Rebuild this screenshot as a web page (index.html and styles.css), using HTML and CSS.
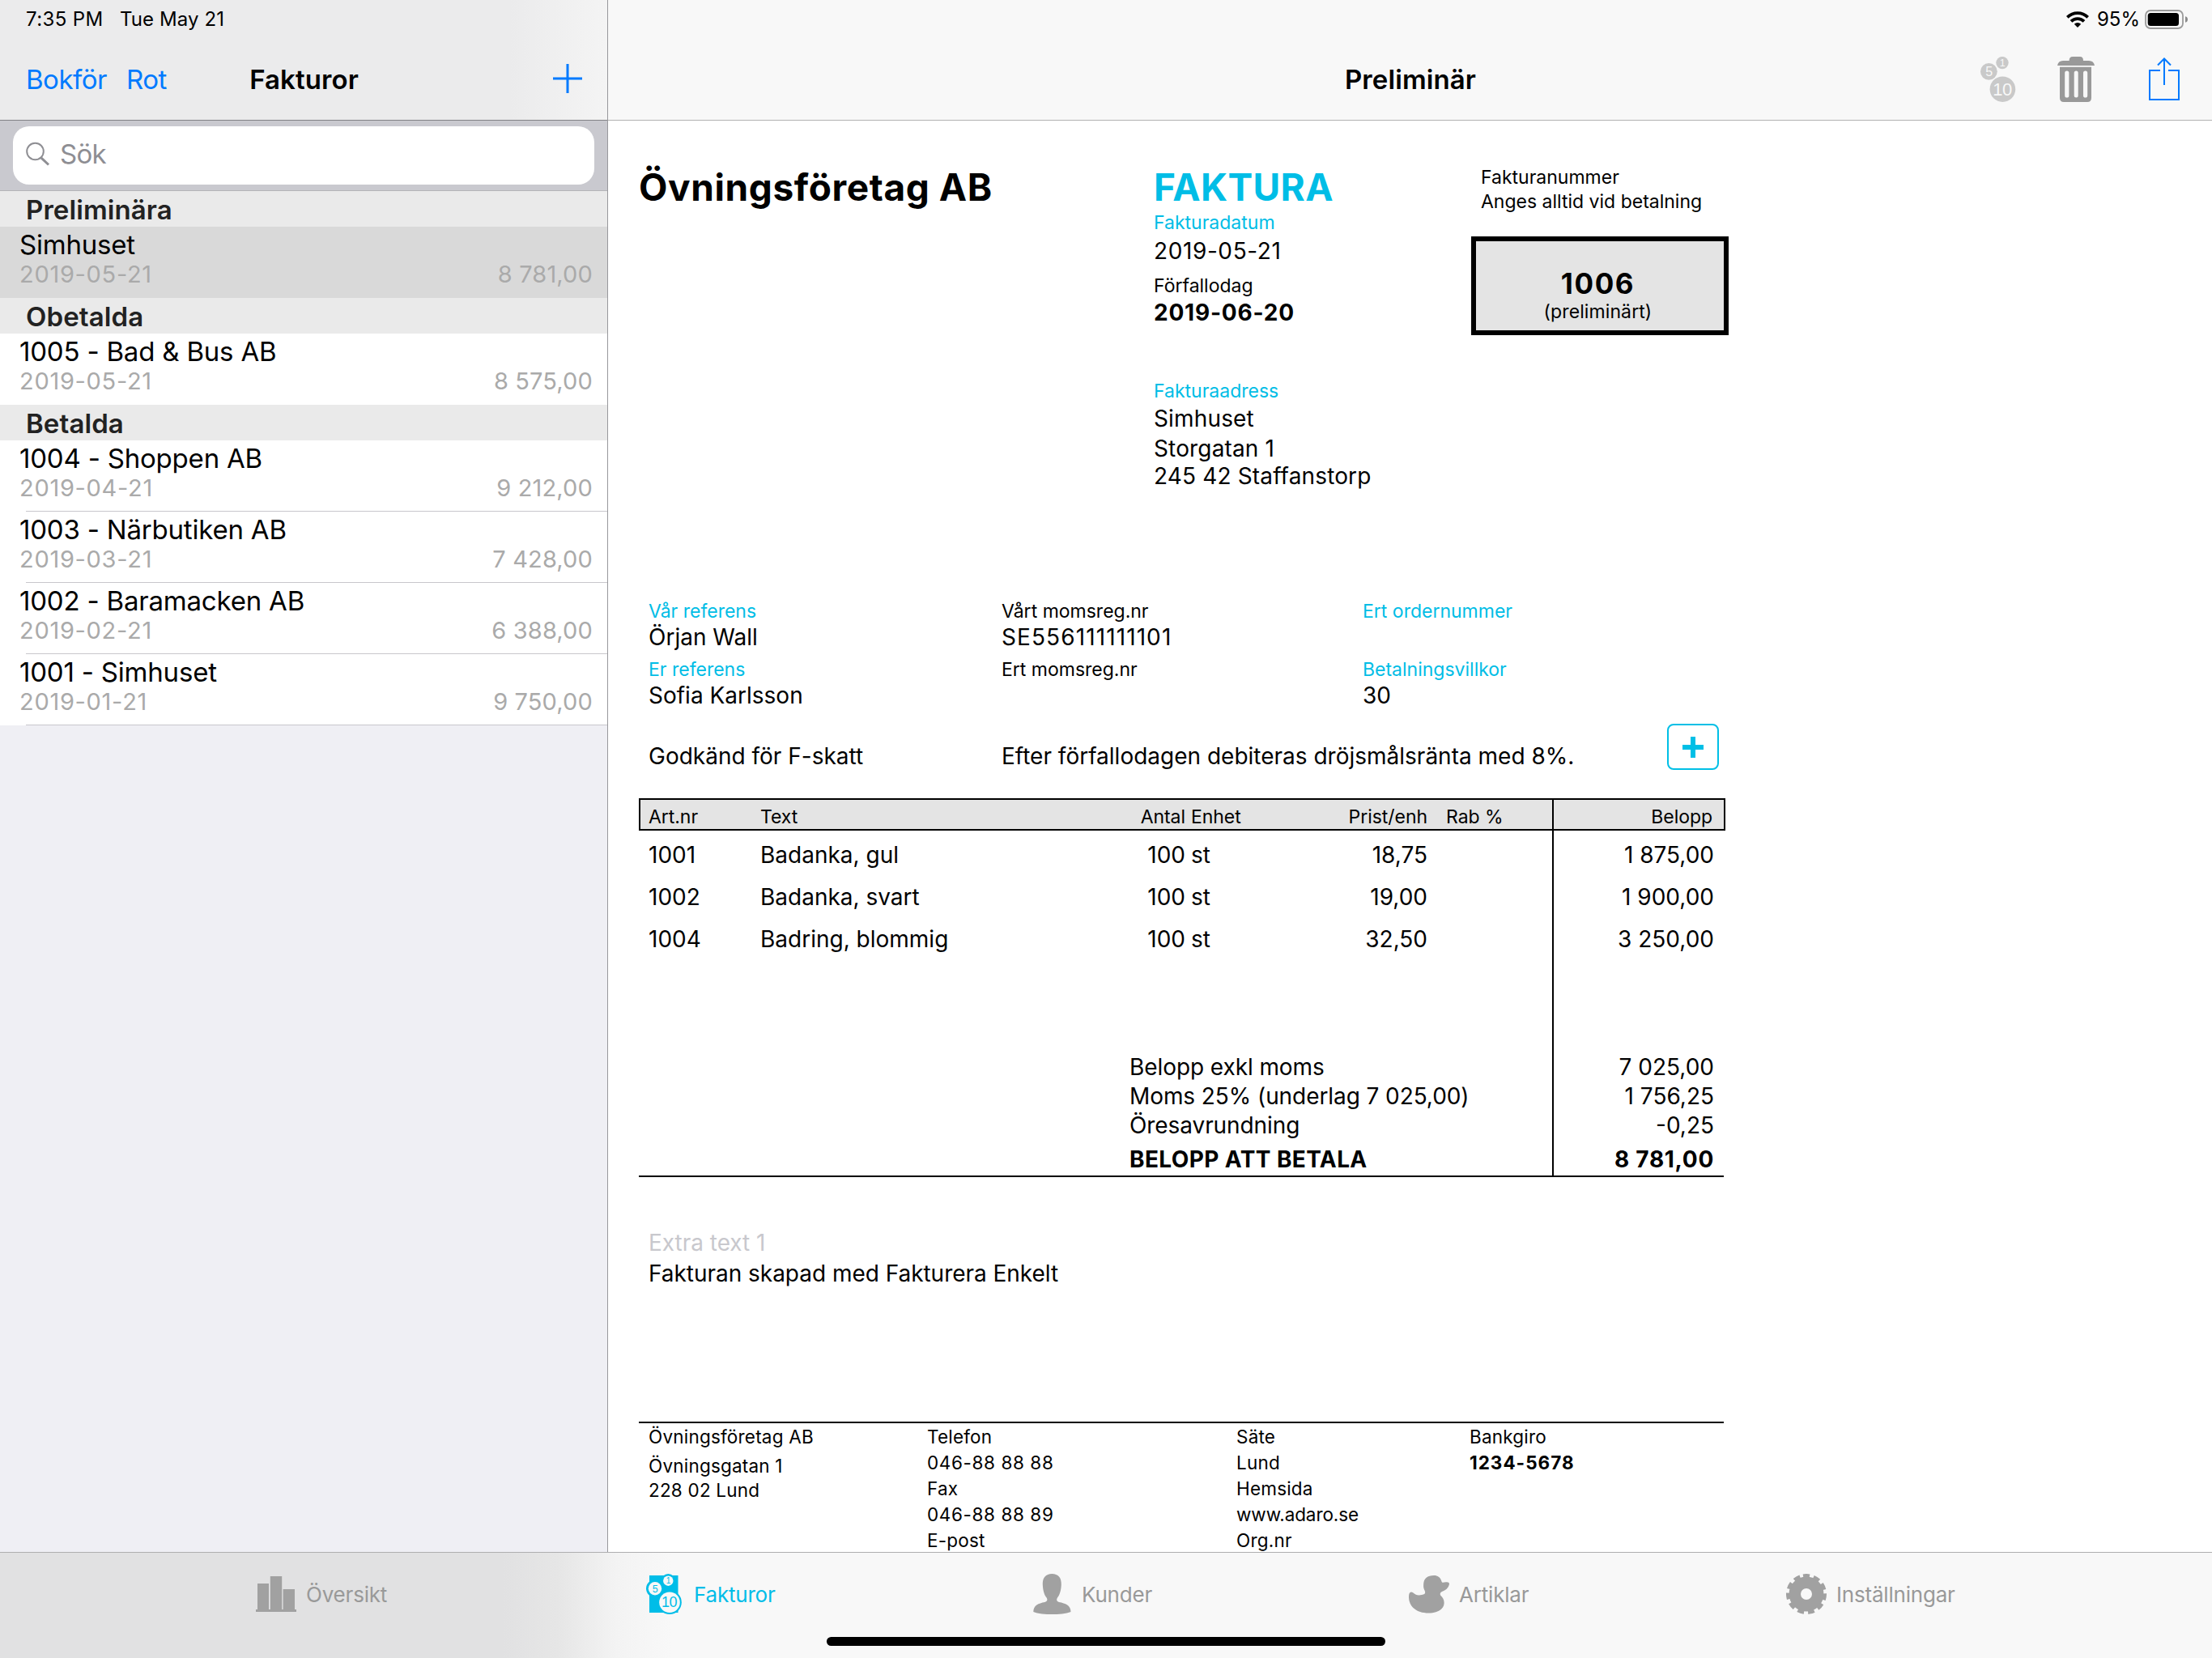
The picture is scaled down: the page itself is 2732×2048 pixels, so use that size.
FILE: index.html
```
<!DOCTYPE html>
<html lang="sv">
<head>
<meta charset="utf-8">
<title>Fakturor</title>
<link rel="stylesheet" href="styles.css">
</head>
<body>

<div class="app">

  <aside class="sidebar">
    <header class="bar bar-left">
      <div class="status"><span class="time">7:35 PM</span><span>Tue May 21</span></div>
      <div class="nav">
        <div class="links"><a>Bokför</a><a>Rot</a></div>
        <h1>Fakturor</h1>
        <svg class="add" width="36" height="36" viewBox="0 0 36 36"><path d="M18 0V36M0 18H36" stroke="#007aff" stroke-width="3"/></svg>
      </div>
    </header>

    <div class="search">
      <div class="field">
        <svg width="30" height="30" viewBox="0 0 30 30" fill="none" stroke="#8e8e93"><circle cx="11.5" cy="12" r="10.3" stroke-width="2"/><path d="M18.8 19.8L28 28.5" stroke-width="3"/></svg>
        <span>Sök</span>
      </div>
    </div>

    <h2>Preliminära</h2>
    <div class="item selected"><b>Simhuset</b><p><span class="date">2019-05-21</span><span>8 781,00</span></p></div>
    <h2>Obetalda</h2>
    <div class="item"><b>1005 - Bad &amp; Bus AB</b><p><span class="date">2019-05-21</span><span>8 575,00</span></p></div>
    <h2>Betalda</h2>
    <div class="item line"><b>1004 - Shoppen AB</b><p><span class="date">2019-04-21</span><span>9 212,00</span></p></div>
    <div class="item line"><b>1003 - Närbutiken AB</b><p><span class="date">2019-03-21</span><span>7 428,00</span></p></div>
    <div class="item line"><b>1002 - Baramacken AB</b><p><span class="date">2019-02-21</span><span>6 388,00</span></p></div>
    <div class="item line"><b>1001 - Simhuset</b><p><span class="date">2019-01-21</span><span>9 750,00</span></p></div>
  </aside>

  <main class="detail">
    <header class="bar">
      <div class="status status-right">
        <svg width="28" height="20" viewBox="0 0 28 20"><g fill="none" stroke="#000" stroke-width="3.8"><path d="M1.3 7.4A18 18 0 0 1 26.7 7.4"/><path d="M6 12.4A11.3 11.3 0 0 1 22 12.4"/></g><path d="M14 20L9.8 15.8A6 6 0 0 1 18.2 15.8Z"/></svg>
        <span>95%</span>
        <svg width="53" height="24" viewBox="0 0 53 24"><rect x="1" y="1" width="46" height="22" rx="6" fill="none" stroke="#9b9b9b" stroke-width="1.8"/><rect x="3.7" y="4" width="38.3" height="16" rx="3.5"/><path d="M50 8.2Q53 9 53 12T50 15.8Z" fill="#8a8a8a"/></svg>
      </div>
      <div class="nav">
        <span></span>
        <h1>Preliminär</h1>
        <div class="tools">
          <svg width="44" height="56" viewBox="0 0 44 56"><g fill="#c9c9c9"><circle cx="27" cy="7.6" r="7.7"/><circle cx="10.4" cy="18.3" r="10.4"/><circle cx="27.4" cy="40.2" r="15.8"/></g><g class="coin" fill="#f8f8f8"><text x="27" y="12" font-size="12.5">1</text><text x="10.4" y="24" font-size="16">5</text><text x="27" y="48" font-size="22">10</text></g></svg>
          <svg width="46" height="56" viewBox="0 0 46 56" fill="#999"><path d="M0 11Q1 5 7 5H14.6Q14.6 0 19 0H28Q32 0 32 5H39Q45 5 46 11Z"/><path fill-rule="evenodd" d="M3 12.8H42V51Q42 56 37 56H8Q3 56 3 51ZM9.2 20V48A2.6 2.6 0 0 0 14.4 48V20A2.6 2.6 0 0 0 9.2 20ZM20.7 20V48A2.5 2.5 0 0 0 25.7 48V20A2.5 2.5 0 0 0 20.7 20ZM32 20V48A2.6 2.6 0 0 0 37.2 48V20A2.6 2.6 0 0 0 32 20Z"/></svg>
          <svg width="38" height="54" viewBox="0 0 38 54" fill="none" stroke="#007aff" stroke-width="2"><path d="M14 16H1V52H37V16H24M19 34V1.5M11 9.5L19 1.5L27 9.5"/></svg>
        </div>
      </div>
    </header>

    <div class="paper">
      <section class="head">
        <h3>Övningsföretag AB</h3>
        <div>
          <h3 class="blue kind">FAKTURA</h3>
          <p class="label blue">Fakturadatum</p>
          <p class="invoice-date">2019-05-21</p>
          <p class="label due">Förfallodag</p>
          <p class="due-date">2019-06-20</p>
          <p class="label blue address">Fakturaadress</p>
          <p>Simhuset</p>
          <p>Storgatan 1</p>
          <p class="city">245 42 Staffanstorp</p>
        </div>
        <div>
          <p class="label note">Fakturanummer</p>
          <p class="label note">Anges alltid vid betalning</p>
          <div class="number"><strong>1006</strong><span>(preliminärt)</span></div>
        </div>
      </section>

      <section class="refs">
        <div><p class="label blue">Vår referens</p><p>Örjan Wall</p><p class="label blue">Er referens</p><p>Sofia Karlsson</p></div>
        <div><p class="label">Vårt momsreg.nr</p><p class="vat">SE556111111101</p><p class="label">Ert momsreg.nr</p></div>
        <div><p class="label blue">Ert ordernummer</p><p></p><p class="label blue">Betalningsvillkor</p><p>30</p></div>
      </section>

      <section class="terms">
        <p>Godkänd för F-skatt</p>
        <p>Efter förfallodagen debiteras dröjsmålsränta med 8%.</p>
        <button><svg width="26" height="26" viewBox="0 0 26 26"><path d="M13 0V26M0 13H26" stroke="#00bfe6" stroke-width="6"/></svg></button>
      </section>

      <section class="table">
        <div class="row thead"><span>Art.nr</span><span>Text</span><span class="r">Antal</span><span class="unit">Enhet</span><span class="r">Prist/enh</span><span class="rab">Rab %</span><span class="sum">Belopp</span></div>
        <div class="row first"><span>1001</span><span>Badanka, gul</span><span class="r">100</span><span class="unit">st</span><span class="r">18,75</span><span></span><span class="sum">1 875,00</span></div>
        <div class="row"><span>1002</span><span>Badanka, svart</span><span class="r">100</span><span class="unit">st</span><span class="r">19,00</span><span></span><span class="sum">1 900,00</span></div>
        <div class="row"><span>1004</span><span>Badring, blommig</span><span class="r">100</span><span class="unit">st</span><span class="r">32,50</span><span></span><span class="sum">3 250,00</span></div>
        <div class="total filler"><span></span><span class="sum"></span></div>
        <div class="total"><span>Belopp exkl moms</span><span class="sum">7 025,00</span></div>
        <div class="total"><span>Moms 25% (underlag 7 025,00)</span><span class="sum">1 756,25</span></div>
        <div class="total"><span>Öresavrundning</span><span class="sum">-0,25</span></div>
        <div class="total pay"><span>BELOPP ATT BETALA</span><span class="sum">8 781,00</span></div>
      </section>

      <section class="extra">
        <p class="hint">Extra text 1</p>
        <p>Fakturan skapad med Fakturera Enkelt</p>
      </section>

      <footer class="company">
        <div class="addr"><p>Övningsföretag AB</p><p>Övningsgatan 1</p><p>228 02 Lund</p></div>
        <div><p>Telefon</p><p class="tel">046-88 88 88</p><p>Fax</p><p class="tel">046-88 88 89</p><p>E-post</p></div>
        <div><p>Säte</p><p>Lund</p><p>Hemsida</p><p class="web">www.adaro.se</p><p>Org.nr</p></div>
        <div><p>Bankgiro</p><p class="giro">1234-5678</p></div>
      </footer>
    </div>
  </main>

  <nav class="tabbar">
    <div class="tabs">
      <a class="tab"><svg width="50" height="50" viewBox="0 0 50 50" fill="#a1a1a1"><path d="M2 12H16V44H17.8V3H32.2V44H33.6V19H48V44H50V47H0V44H2Z"/></svg>Översikt</a>
      <a class="tab active"><svg width="50" height="50" viewBox="0 0 50 50"><g fill="#00bde8"><path d="M7 2H42.5V48H7Z"/><circle cx="30.3" cy="8.7" r="8.7"/><circle cx="14" cy="18.3" r="11"/><circle cx="32" cy="35.2" r="14.8"/></g><g fill="#f8f8f8"><circle cx="30.3" cy="8.7" r="6.2"/><circle cx="14" cy="18.3" r="8.2"/><circle cx="32" cy="35.2" r="12.8"/></g><g class="coin" fill="#00bde8"><text x="30.3" y="12.3" font-size="10">1</text><text x="14" y="22.8" font-size="12.5">5</text><text x="31.4" y="41.2" font-size="18">10</text></g></svg>Fakturor</a>
      <a class="tab"><svg width="50" height="50" viewBox="0 0 50 50" fill="#a1a1a1"><path d="M25.3 0C33 0 37 5 36.8 13C36.6 20 35 26 32 29.5C30.5 32 31 34 34 35C42 36.5 48.5 39 48.5 47C43 49.5 33 50 25.3 50C17.6 50 7.5 49.5 2.3 47C2.3 39 8.5 36.5 16.5 35C19.6 34 20 32 18.6 29.5C15.6 26 14 20 13.8 13C13.6 5 17.6 0 25.3 0Z"/></svg>Kunder</a>
      <a class="tab"><svg width="50" height="50" viewBox="0 0 50 50" fill="#a1a1a1"><path d="M31 2C36.5 2 39.5 5.5 40.5 9.5C41 11.5 43 10.5 46 10.3C49 10 50.5 11 49.8 13.5C48.5 18 45.5 20 42 21.5C38.5 23 38 25 39.5 27C42 29.5 43.8 32 43.6 36.5C43.2 44 35 48.5 24.5 48.5C9 48.5 0 40 0 28.5C0 23 2 21 5.5 23.5C8.5 26 11 27 16 26C20.5 25.5 20.8 23.5 19.5 20.5C18 17.5 18 15.5 18.2 12.5C18.5 6 23 2 31 2Z"/></svg>Artiklar</a>
      <a class="tab"><svg width="50" height="50" viewBox="0 0 50 50" fill="none" stroke="#a1a1a1"><circle cx="25" cy="25" r="14.2" stroke-width="14.4"/><circle cx="25" cy="25" r="22.5" stroke-width="5" stroke-dasharray="7.9 4.952" transform="rotate(-100 25 25)"/></svg>Inställningar</a>
    </div>
    <div class="home"></div>
  </nav>

</div>

</body>
</html>
```
FILE: styles.css
```
* { box-sizing: border-box; margin: 0; padding: 0; }
body { background: #fff; color: #000; font-family: Inter, "Liberation Sans", sans-serif; font-size: 28px; white-space: nowrap; }
svg { display: block; flex: none; }
.app { display: grid; grid-template: 1917px 131px / 751px 1fr; width: 2732px; height: 2048px; overflow: hidden; }

/* top bars */
.bar { height: 149px; background: #f8f8f8; border-bottom: 1px solid #b2b2b2; }
.bar-left { background: linear-gradient(90deg, #ebebec 630px, #f4f4f4 750px); border-bottom-color: #828286; }
.status { height: 46px; line-height: 48px; padding-left: 32px; display: flex; font-size: 24px; letter-spacing: .1px; }
.time { width: 116px; letter-spacing: .4px; }
.status-right { justify-content: flex-end; align-items: center; padding: 2px 30px 0 0; gap: 8px; letter-spacing: 0; }
.status-right span { margin: -1px -2px 0 2px; }
.nav { height: 102px; padding: 1px 31px 0 32px; display: grid; grid-template-columns: 1fr auto 1fr; align-items: center; }
.nav h1 { font-size: 33px; font-weight: 600; letter-spacing: .1px; }
.links { display: flex; gap: 24px; color: #007aff; font-size: 33px; letter-spacing: -.5px; }
.add { justify-self: end; margin-bottom: 2px; }
.tools { display: flex; align-items: center; justify-content: flex-end; padding: 1px 9px 0 0; }
.tools svg + svg { margin-left: 51px; }
.tools svg:last-child { margin-left: 67px; }
.coin { font-family: "Liberation Sans", sans-serif; text-anchor: middle; letter-spacing: -.5px; }

/* invoice list */
.sidebar { background: #efeff4; border-right: 1px solid #98989c; }
.search { height: 87px; padding: 7px 16px; background: #c9c9cf; border-bottom: 1px solid #b4b4b8; }
.field { height: 72px; padding: 0 0 4px 16px; display: flex; align-items: center; gap: 12px; background: #fff; border-radius: 20px; color: #8e8e93; font-size: 33px; letter-spacing: -.7px; }
.field span { margin-top: -1px; }
.sidebar h2 { height: 44px; line-height: 46px; padding-left: 32px; background: #eaeaea; color: #222; font-size: 33px; font-weight: 600; letter-spacing: .1px; }
.item { height: 88px; padding-top: 2px; background: #fff; }
.item b { display: block; padding-left: 24px; line-height: 40px; font-size: 33px; font-weight: 400; letter-spacing: -.2px; }
.item p { display: flex; justify-content: space-between; padding: 1px 18px 0 24px; line-height: 32px; color: #aaa; font-size: 29px; letter-spacing: .15px; }
.item .date { letter-spacing: .7px; }
.selected { background: #d9d9d9; }
.line::after { content: ""; display: block; height: 1px; margin: 12px 0 0 32px; background: #c8c7cc; }

/* invoice */
.detail { overflow: hidden; }
.paper { padding-left: 38px; width: 1384px; }
.blue { color: #00bde6; }
.label { font-size: 23px; letter-spacing: 0; line-height: 33px; height: 32px; }
.head { height: 590px; padding-top: 54px; display: grid; grid-template-columns: 636px 392px 318px; letter-spacing: .15px; line-height: 36px; }
.head h3 { font-size: 46px; line-height: 56px; letter-spacing: .6px; }
.head .kind { letter-spacing: .4px; }
.invoice-date { line-height: 39px; letter-spacing: .6px; }
.due { margin-top: 7px; }
.due-date { line-height: 34px; font-weight: 700; letter-spacing: .8px; }
.address { margin-top: 64px; }
.address + p { line-height: 37px; }
.city { line-height: 32px; }
.note { height: 30px; padding-left: 12px; line-height: 31px; }
.note:first-child { margin-top: 1px; }
.number { height: 122px; margin-top: 28px; padding: 31px 5px 0 0; display: flex; flex-direction: column; align-items: center; background: #e4e4e4; border: 6px solid #000; }
.number strong { font-size: 35px; line-height: 42px; letter-spacing: 1.6px; }
.number span { font-size: 23px; line-height: 28px; letter-spacing: .1px; }

.refs, .terms { display: grid; grid-template-columns: 436px 446px 1fr; padding-left: 12px; }
.refs { height: 155px; line-height: 33px; }
.refs p { height: 32px; }
.refs p:nth-child(3) { margin-top: 8px; }
.vat { letter-spacing: 1.1px; }
.terms { grid-template-columns: 436px 822px 64px; height: 92px; line-height: 40px; }
.terms p { padding-top: 20px; }
.terms button { height: 57px; display: grid; place-items: center; background: none; border: 2px solid #00bfe6; border-radius: 8px; }

.table { border-bottom: 2px solid #000; width: 1340px; }
.row { display: grid; grid-template: 100% / 150px 421px 104px 121px 178px 154px 214px; width: 1342px; height: 52px; line-height: 53px; }
.row span:first-child { padding-left: 12px; }
.thead { height: 40px; line-height: 46px; background: #e4e4e4; box-shadow: inset 0 0 0 2px #000; font-size: 23px; letter-spacing: -.05px; }
.first { height: 56px; line-height: 61px; }
.r { text-align: right; }
.unit { padding-left: 7px; }
.rab { padding-left: 23px; }
.sum { padding-right: 14px; border-left: 2px solid #000; text-align: right; }
.thead .sum { padding-right: 16px; }
.total { display: grid; grid-template: 100% / 1128px 214px; width: 1342px; height: 36px; line-height: 37px; }
.total span:first-child { padding-left: 606px; letter-spacing: -.08px; }
.filler { height: 114px; }
.pay { height: 44px; line-height: 49px; font-weight: 700; }
.pay span:first-child { letter-spacing: .4px; }
.pay .sum { letter-spacing: .7px; }

.extra { height: 302px; padding: 62px 0 0 12px; line-height: 38px; letter-spacing: -.03px; }
.hint { color: #c8c8cd; }
.company { width: 1340px; padding: 1px 0 0 12px; display: grid; grid-template-columns: 344px 382px 288px 1fr; border-top: 2px solid #000; font-size: 22.5px; line-height: 32px; letter-spacing: .2px; }
.addr p:nth-child(2) { margin-top: 4px; }
.addr p:nth-child(3) { line-height: 28px; }
.tel { letter-spacing: .6px; }
.web { letter-spacing: -.1px; }
.giro { font-weight: 700; letter-spacing: 1px; }

/* bottom tabs */
.tabbar { grid-column: 1 / 3; border-top: 1px solid #aeaeb0; background: linear-gradient(90deg, #e1e1e2 620px, #e6e6e6 690px, #f3f3f3 760px, #f8f8f8 830px); }
.tabs { height: 102px; padding-left: 316px; display: grid; grid-template-columns: 479px 479px 466px 466px auto; align-items: center; }
.tab { display: flex; align-items: center; gap: 12px; color: #999; font-size: 26px; letter-spacing: -.2px; }
.active { color: #00bde8; }
.home { width: 690px; height: 11px; margin: 2px auto 0; border-radius: 6px; background: #000; }
```
